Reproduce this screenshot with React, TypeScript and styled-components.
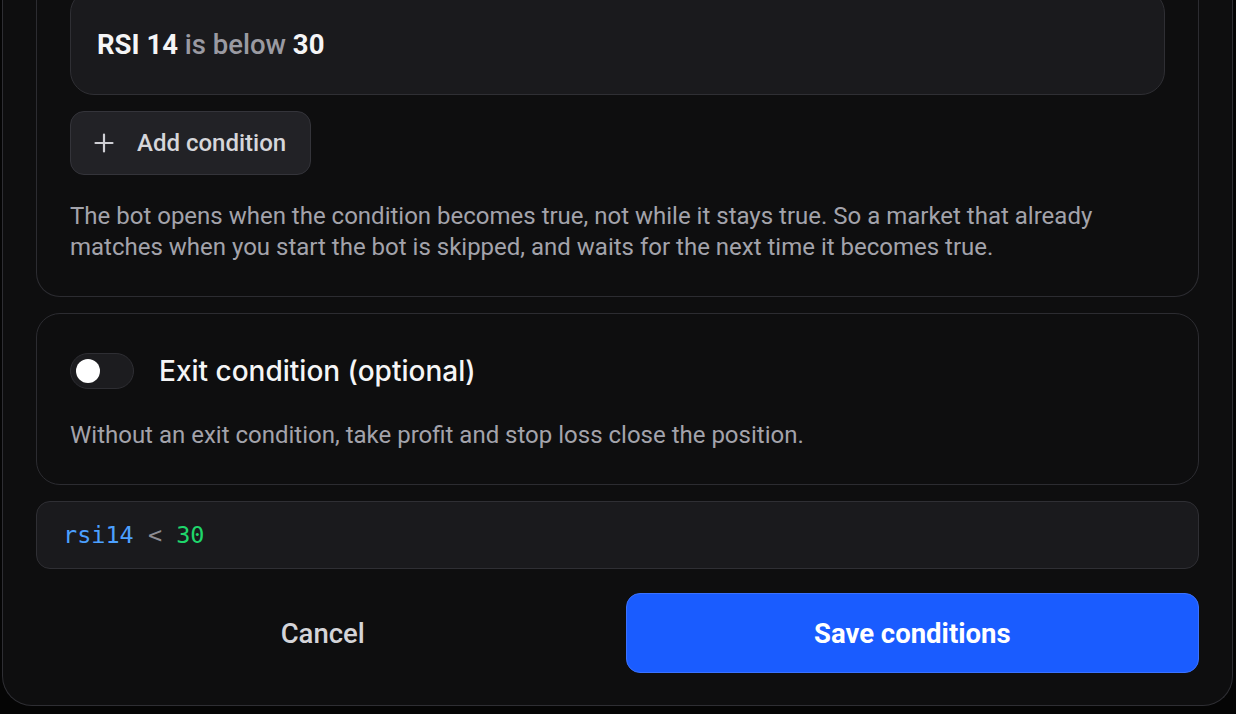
import React from "react";
import styled, { createGlobalStyle } from "styled-components";

const Global = createGlobalStyle`
  html, body { margin: 0; padding: 0; background: #050505; }
  body { font-family: Roboto, "Liberation Sans", sans-serif; -webkit-font-smoothing: antialiased; }
  * { box-sizing: border-box; }
`;

const Viewport = styled.div`
  height: 714px;
  overflow: hidden;
  display: flex;
  flex-direction: column;
  justify-content: flex-end;
`;

const Modal = styled.div`
  margin: 0 3px 8px 2px;
  background: #0e0e0f;
  border: 1px solid #2e2e33;
  border-top: none;
  border-radius: 0 0 30px 30px;
  padding: 0 33px 32px;
  display: flex;
  flex-direction: column;
  gap: 16px;
`;

const Section = styled.section`
  border: 1px solid #2c2c31;
  border-top: none;
  border-radius: 0 0 24px 24px;
  padding: 0 33px 33px;
  display: flex;
  flex-direction: column;
`;

const Card = styled.section`
  border: 1px solid #2c2c31;
  border-radius: 24px;
  padding: 35px 33px 33px;
  display: flex;
  flex-direction: column;
  gap: 27px;
`;

const ConditionList = styled.div`
  display: flex;
  flex-direction: column;
  gap: 16px;
  margin-bottom: 26px;
`;

const ConditionRow = styled.div`
  height: 106px;
  background: #1a1a1d;
  border: 1px solid #2f2f34;
  border-radius: 24px;
  display: flex;
  align-items: center;
  padding: 4px 26px 0;
  font-size: 27.5px;
  color: #9a9aa2;
  font-weight: 500;
`;

const Strong = styled.b`
  color: #f5f5f6;
  font-weight: 700;
`;

const AddButton = styled.button`
  align-self: flex-start;
  height: 64px;
  display: flex;
  align-items: center;
  gap: 23px;
  padding: 0 24px 0 23px;
  background: #222226;
  border: 1px solid #34343a;
  border-radius: 14px;
  color: #d6d6da;
  font-family: Roboto, "Liberation Sans", sans-serif;
  font-size: 24px;
  font-weight: 500;
  white-space: nowrap;
  cursor: pointer;
`;

const Help = styled.p`
  margin: 0;
  font-size: 24px;
  line-height: 31px;
  color: #a3a3ab;
`;

const HeaderRow = styled.div`
  display: flex;
  align-items: center;
  gap: 25px;
  height: 44px;
`;

const Track = styled.span<{ $on?: boolean }>`
  width: 64px;
  height: 36px;
  border-radius: 18px;
  background: ${(p) => (p.$on ? "#1b5cff" : "#1c1c1f")};
  border: 1px solid #2e2e33;
  display: flex;
  align-items: center;
  padding: 0 5px;
  justify-content: ${(p) => (p.$on ? "flex-end" : "flex-start")};
  flex-shrink: 0;
`;

const Knob = styled.span`
  width: 24px;
  height: 24px;
  border-radius: 50%;
  background: #ffffff;
`;

const Title = styled.h3`
  margin: 0;
  font-family: Inter, "Open Sans", sans-serif;
  font-size: 28px;
  font-weight: 500;
  color: #f5f5f6;
  letter-spacing: 0;
`;

const CodeBox = styled.div`
  height: 68px;
  background: #1a1a1d;
  border: 1px solid #2f2f34;
  border-radius: 14px;
  display: flex;
  align-items: center;
  padding: 0 26px;
  font-family: "DejaVu Sans Mono", "Liberation Mono", monospace;
  font-size: 23.5px;
  white-space: pre;
`;

const Tok = styled.span<{ $kind: "id" | "op" | "num" }>`
  color: ${(p) => (p.$kind === "id" ? "#4ca0ff" : p.$kind === "num" ? "#1fd66b" : "#8c8c93")};
`;

const Footer = styled.div`
  display: grid;
  grid-template-columns: 1fr 1fr;
  gap: 16px;
  margin-top: 8px;
`;

const FooterButton = styled.button<{ $primary?: boolean }>`
  height: 80px;
  border-radius: 14px;
  border: 1px solid ${(p) => (p.$primary ? "#3a72ff" : "transparent")};
  background: ${(p) => (p.$primary ? "#1a5cff" : "transparent")};
  color: ${(p) => (p.$primary ? "#ffffff" : "#d4d4d8")};
  font-family: Roboto, "Liberation Sans", sans-serif;
  font-size: 27.5px;
  font-weight: ${(p) => (p.$primary ? 700 : 500)};
  cursor: pointer;
`;

const PlusIcon = () => (
  <svg width="20" height="20" viewBox="0 0 20 20" fill="none" stroke="#cfcfd4" strokeWidth="2.2" strokeLinecap="round">
    <path d="M10 1.5v17M1.5 10h17" />
  </svg>
);

export default function App() {
  return (
    <>
      <Global />
      <Viewport>
        <Modal>
          <Section>
            <ConditionList>
              <ConditionRow>
                <Strong>RSI 14</Strong>&nbsp;is below&nbsp;<Strong>30</Strong>
              </ConditionRow>
              <AddButton>
                <PlusIcon />
                Add condition
              </AddButton>
            </ConditionList>
            <Help>
              The bot opens when the condition becomes true, not while it stays true. So a market that already
              matches when you start the bot is skipped, and waits for the next time it becomes true.
            </Help>
          </Section>
          <Card>
            <HeaderRow>
              <Track>
                <Knob />
              </Track>
              <Title>Exit condition (optional)</Title>
            </HeaderRow>
            <Help>Without an exit condition, take profit and stop loss close the position.</Help>
          </Card>
          <CodeBox>
            <Tok $kind="id">rsi14</Tok>
            <Tok $kind="op"> &lt; </Tok>
            <Tok $kind="num">30</Tok>
          </CodeBox>
          <Footer>
            <FooterButton>Cancel</FooterButton>
            <FooterButton $primary>Save conditions</FooterButton>
          </Footer>
        </Modal>
      </Viewport>
    </>
  );
}
